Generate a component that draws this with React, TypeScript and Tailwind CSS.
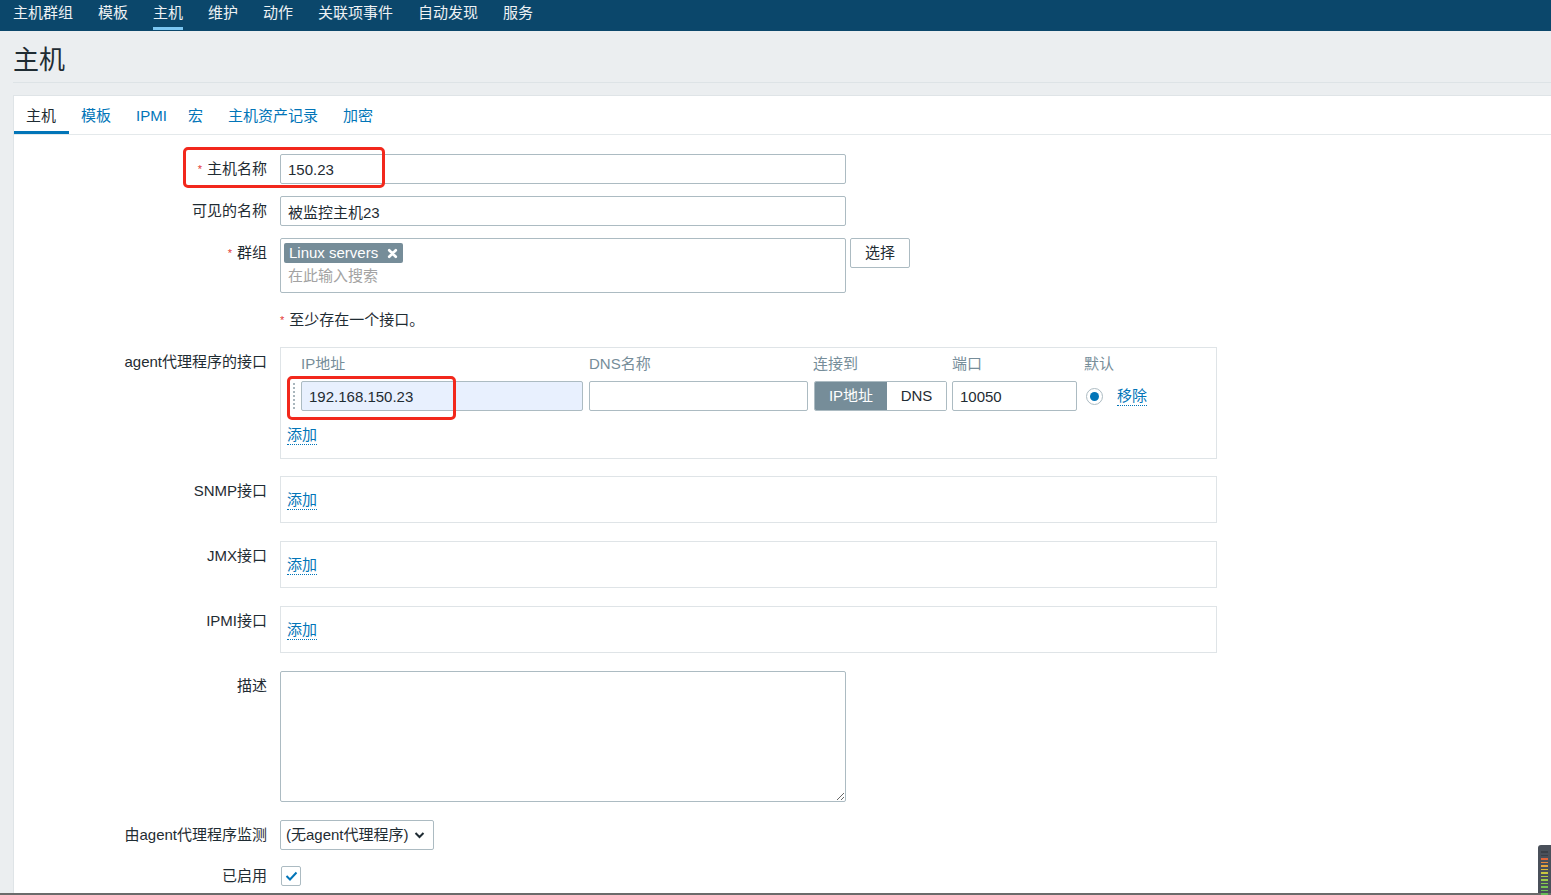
import React from "react";

const FONT = "font-['Liberation_Sans','Noto_Sans_CJK_SC',sans-serif]";

const NAV = ["主机群组", "模板", "主机", "维护", "动作", "关联项事件", "自动发现", "服务"];
const TABS = ["主机", "模板", "IPMI", "宏", "主机资产记录", "加密"];

function Req() {
  return <span className="mr-[5px] text-[11px] align-top text-[#e33734]">*</span>;
}

function AddLink({ text = "添加" }: { text?: string }) {
  return (
    <span className="block w-fit border-b border-dotted border-[#0275b8] text-[15px] leading-[18px] text-[#0275b8]">
      {text}
    </span>
  );
}

function Row({
  label,
  required,
  className = "",
  labelClass = "leading-[30px]",
  overlay,
  children,
}: {
  label?: string;
  required?: boolean;
  className?: string;
  labelClass?: string;
  overlay?: React.ReactNode;
  children: React.ReactNode;
}) {
  return (
    <div className={`relative flex ${className}`}>
      <div className={`w-[253px] shrink-0 text-right text-[15px] text-[#1f2c33] ${labelClass}`}>
        {required ? <Req /> : null}
        {label}
      </div>
      <div className="ml-[13px] min-w-0">{children}</div>
      {overlay}
    </div>
  );
}

function TextBox({ value, w = "w-[566px]", bg = "bg-white" }: { value: string; w?: string; bg?: string }) {
  return (
    <input
      readOnly
      value={value}
      className={`block h-[30px] ${w} rounded-[2px] border border-[#acbbc2] ${bg} px-[7px] text-[15px] text-[#1f2c33] outline-none`}
    />
  );
}

function IfaceBox() {
  return (
    <div className="h-[47px] w-[937px] border border-[#dfe4e7] px-[6px] pt-[14px]">
      <AddLink />
    </div>
  );
}

export default function App() {
  return (
    <div className={`relative h-[895px] overflow-hidden bg-[#ebeef0] ${FONT}`}>
      {/* top navigation */}
      <nav className="flex h-[31px] gap-[25px] bg-[#0b476b] pl-[13px]">
        {NAV.map((n, i) => (
          <div key={n} className="flex flex-col">
            <span className="h-[25px] text-[15px] leading-[25px] text-[#eef2f4]">{n}</span>
            {i === 2 ? <span className="mt-[2px] h-[3px] bg-[#7cc7f2]" /> : null}
          </div>
        ))}
      </nav>

      <div className="pl-[13px]">
        <h1 className="mt-[11px] border-b border-[#dde3e6] pb-[4px] text-[26px] leading-[36px] font-normal text-[#1f2c33]">
          主机
        </h1>

        <div className="mt-[12px] border-t border-l border-[#dfe4e7] bg-white pb-10">
          {/* tabs */}
          <div className="flex border-b border-[#e4e9eb]">
            {TABS.map((t, i) => (
              <div
                key={t}
                className={`h-[38px] pl-3 text-[15px] leading-[39px] ${t === "IPMI" ? "pr-[9px]" : "pr-[13px]"} ${
                  i === 0 ? "border-b-[3px] border-[#0275b8] text-[#1f2c33]" : "text-[#0275b8]"
                }`}
              >
                {t}
              </div>
            ))}
          </div>

          <div className="pt-[19px]">
            <Row
              label="主机名称"
              required
              overlay={
                <div className="pointer-events-none absolute left-[169px] top-[-7px] h-[41px] w-[202px] rounded-[5px] border-[3px] border-[#f2281c]" />
              }
            >
              <TextBox value="150.23" />
            </Row>

            <Row label="可见的名称" className="mt-3">
              <TextBox value="被监控主机23" />
            </Row>

            <Row label="群组" required className="mt-3">
              <div className="flex items-start gap-[4px]">
                <div className="h-[55px] w-[566px] rounded-[2px] border border-[#acbbc2] px-[3px] pt-[4px]">
                  <div className="flex h-[20px] w-fit items-center gap-[9px] rounded-[2px] bg-[#768d99] px-[5px] text-[15px] leading-[20px] text-white">
                    Linux servers
                    <svg width="11" height="11" viewBox="0 0 10 10">
                      <path d="M2 2l6 6M8 2l-6 6" stroke="white" strokeWidth="2.4" strokeLinecap="round" />
                    </svg>
                  </div>
                  <div className="pl-[4px] text-[15px] leading-[26px] text-[#a3a3a3]">在此输入搜索</div>
                </div>
                <div className="h-[30px] w-[60px] rounded-[2px] border border-[#acbbc2] bg-white text-center text-[15px] leading-[28px] text-[#1f2c33]">
                  选择
                </div>
              </div>
            </Row>

            <Row className="mt-3">
              <div className="text-[15px] leading-[30px] text-[#1f2c33]">
                <Req />
                至少存在一个接口。
              </div>
            </Row>

            <Row label="agent代理程序的接口" className="mt-3">
              <div className="relative w-[937px] border border-[#dfe4e7] px-[6px] pt-[6px] pb-[13px]">
                <div className="ml-[14px] flex h-[20px] text-[15px] leading-[20px] text-[#768d99]">
                  <span className="w-[282px]">IP地址</span>
                  <span className="ml-[6px] w-[219px]">DNS名称</span>
                  <span className="ml-[5px] w-[139px]">连接到</span>
                  <span className="w-[132px]">端口</span>
                  <span>默认</span>
                </div>
                <div className="mt-[7px] flex items-center">
                  <div className="flex w-[14px] justify-end pr-[6px]">
                    <div className="h-[26px] border-l-[2px] border-dotted border-[#a9b6bd]" />
                  </div>
                  <TextBox value="192.168.150.23" w="w-[282px]" bg="bg-[#e8f0fe]" />
                  <div className="ml-[6px]">
                    <TextBox value="" w="w-[219px]" />
                  </div>
                  <div className="ml-[6px] flex h-[30px] overflow-hidden rounded-[2px] border border-[#acbbc2] text-[15px] leading-[28px]">
                    <span className="w-[72px] bg-[#768d99] text-center text-white">IP地址</span>
                    <span className="w-[59px] bg-white text-center text-[#1f2c33]">DNS</span>
                  </div>
                  <div className="ml-[5px]">
                    <TextBox value="10050" w="w-[125px]" />
                  </div>
                  <div className="ml-[9px] flex h-[17px] w-[17px] items-center justify-center rounded-full border border-[#acbbc2] bg-white">
                    <div className="h-[9px] w-[9px] rounded-full bg-[#0275b8]" />
                  </div>
                  <div className="ml-[14px]">
                    <AddLink text="移除" />
                  </div>
                </div>
                <div className="mt-[15px]">
                  <AddLink />
                </div>
                {/* annotation */}
                <div className="pointer-events-none absolute left-[6px] top-[28px] h-[44px] w-[169px] rounded-[5px] border-[3px] border-[#f2281c]" />
              </div>
            </Row>

            <Row label="SNMP接口" className="mt-[17px]">
              <IfaceBox />
            </Row>
            <Row label="JMX接口" className="mt-[18px]">
              <IfaceBox />
            </Row>
            <Row label="IPMI接口" className="mt-[18px]">
              <IfaceBox />
            </Row>

            <Row label="描述" className="mt-[18px]">
              <textarea
                readOnly
                className="block h-[131px] w-[566px] rounded-[2px] border border-[#acbbc2] bg-white outline-none"
              />
            </Row>

            <Row label="由agent代理程序监测" className="mt-[18px]">
              <div className="flex h-[30px] w-[154px] items-center justify-between rounded-[2px] border border-[#acbbc2] bg-white pl-[5px] pr-[8px] text-[15px] text-[#1f2c33]">
                <span>(无agent代理程序)</span>
                <svg width="11" height="8" viewBox="0 0 11 8">
                  <path d="M1.5 2l4 4 4-4" stroke="#1f2c33" strokeWidth="2" fill="none" />
                </svg>
              </div>
            </Row>

            <Row label="已启用" className="mt-4" labelClass="leading-[20px]">
              <div className="ml-[1px] flex h-[20px] w-[20px] items-center justify-center rounded-[2px] border border-[#acbbc2] bg-white">
                <svg width="13" height="10" viewBox="0 0 13 10">
                  <path d="M1.5 5l3.5 3.5 6.5-7" stroke="#0275b8" strokeWidth="2" fill="none" />
                </svg>
              </div>
            </Row>
          </div>
        </div>
      </div>

      {/* window edge overlay */}
      <div className="absolute bottom-0 left-0 right-0 h-[2px] bg-[#6b6b6b]" />
      <div className="absolute bottom-[2px] right-0 flex h-[48px] w-[13px] flex-col gap-[2px] rounded-tl-[3px] bg-[#4a505a] px-[3px] pt-[6px]">
        {["#3a3f47", "#3a3f47", "#e0643a", "#e88a3c", "#e9a63e", "#dcbc3e", "#c9c83f", "#b4cc45", "#9ccc4a", "#86c94f", "#78c452", "#6fbf55", "#69bb56"].map(
          (c, i) => (
            <span key={i} className="h-[1.5px] shrink-0" style={{ backgroundColor: c }} />
          )
        )}
      </div>
    </div>
  );
}
